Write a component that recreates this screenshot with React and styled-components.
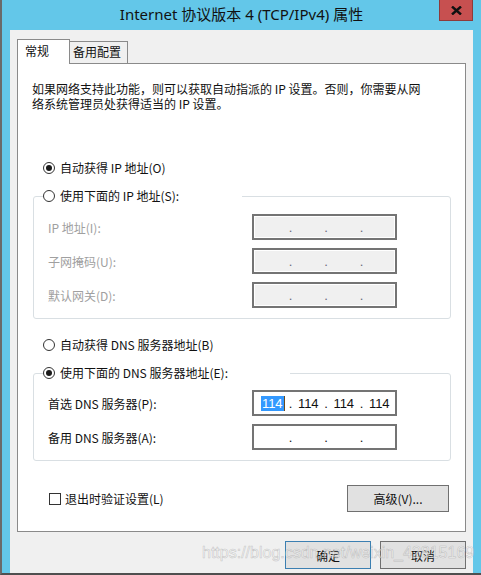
import React from 'react';
import styled, { createGlobalStyle } from 'styled-components';

const UI_FONT = `"Noto Sans CJK SC", "Noto Sans", sans-serif`;

const GlobalStyle = createGlobalStyle`
    html, body {
        margin: 0;
        padding: 0;
        background: #ffffff;
    }

    * {
        box-sizing: border-box;
    }
`;

const Window = styled.div`
    position: relative;
    width: 481px;
    height: 575px;
    display: flex;
    flex-direction: column;
    background: #63c7e9;
    border-left: 2px solid #6a6a6a;
    border-bottom: 2px solid #4f4f4f;
    padding: 0 8px;
    overflow: hidden;
`;

const TitleBar = styled.div`
    height: 30px;
    flex: none;
    display: grid;
    grid-template-columns: 1fr auto 1fr;
`;

const Title = styled.div`
    grid-column: 2;
    align-self: center;
    font-family: "Noto Sans", "Noto Sans CJK SC", sans-serif;
    font-size: 15px;
    line-height: 20px;
    color: #111;
    white-space: nowrap;
    margin-top: -2px;
`;

const CloseButton = styled.div`
    grid-column: 3;
    justify-self: end;
    align-self: start;
    width: 34px;
    height: 21px;
    background: #c75050;
    border: 1px solid #8e3b3b;
    border-top: none;
    display: flex;
    align-items: center;
    justify-content: center;
`;

const Client = styled.div`
    flex: 1;
    background: #f0f0f0;
    padding: 9px 7px 0 7px;
    display: flex;
    flex-direction: column;
    font-family: ${UI_FONT};
    font-size: 12px;
    color: #111;
`;

const TabRow = styled.div`
    display: flex;
    align-items: flex-end;
    margin-bottom: -1px;
    position: relative;
    z-index: 1;
`;

const Tab = styled.div`
    height: ${p => (p.$active ? '25px' : '23px')};
    width: ${p => (p.$active ? '53px' : '58px')};
    padding-left: ${p => (p.$active ? '7px' : '3px')};
    padding-top: ${p => (p.$active ? '3px' : '2px')};
    line-height: 16px;
    background: ${p => (p.$active ? '#ffffff' : '#f0f0f0')};
    border: 1px solid #8a8a8a;
    border-left: ${p => (p.$active ? '1px solid #8a8a8a' : 'none')};
    border-bottom: ${p => (p.$active ? 'none' : '1px solid #8a8a8a')};
`;

const Panel = styled.div`
    height: 469px;
    flex: none;
    background: #ffffff;
    border: 1px solid #8a8a8a;
    padding: 17px 14px 0 15px;
    display: flex;
    flex-direction: column;
`;

const Description = styled.p`
    margin: 0 0 0 -1px;
    line-height: 15px;
    white-space: nowrap;
`;

const OptionRow = styled.label`
    display: flex;
    align-items: center;
    height: 16px;
    line-height: 16px;
    margin: ${p => p.$top || 0}px 0 0 10px;
    white-space: nowrap;
`;

const Radio = styled.span`
    width: 12px;
    height: 12px;
    flex: none;
    border-radius: 50%;
    border: 1px solid #333;
    background: #fff;
    margin-right: 5px;
    display: flex;
    align-items: center;
    justify-content: center;

    &::after {
        content: '';
        width: 6px;
        height: 6px;
        border-radius: 50%;
        background: ${p => (p.$checked ? '#1a1a1a' : 'transparent')};
    }
`;

const Group = styled.fieldset`
    margin: 12px 0 0 0;
    padding: 0 0 10px 0;
    border: 1px solid #d9dfe3;
    border-radius: 3px;
    min-width: 0;
`;

const Legend = styled.legend`
    width: ${p => p.$width}px;
    margin-left: 9px;
    padding: 0;
    height: 16px;
    line-height: 16px;
    display: flex;
    align-items: center;
    white-space: nowrap;
`;

const FieldList = styled.div`
    display: flex;
    flex-direction: column;
    gap: 8px;
    padding: ${p => p.$top}px 0 0 14px;
`;

const FieldRow = styled.div`
    display: flex;
    align-items: center;
    height: 26px;
`;

const FieldLabel = styled.span`
    width: 204px;
    flex: none;
    color: ${p => (p.$disabled ? '#a0a0a0' : '#111')};
`;

const IpBox = styled.div`
    width: 145px;
    height: 26px;
    border: 2px solid #747474;
    background: ${p => (p.$disabled ? '#f0f0f0' : '#ffffff')};
    box-shadow: ${p => (p.$disabled ? 'inset 0 0 0 1px #ffffff' : 'none')};
    padding-left: 3px;
    display: grid;
    grid-template-columns: 1fr 4px 1fr 4px 1fr 4px 1fr;
    align-items: center;
    font-family: "Liberation Sans", Arial, sans-serif;
    font-size: 13px;
    line-height: 15px;
    color: #111;
`;

const Octet = styled.span`
    text-align: center;
`;

const Selected = styled.span`
    background: #3399ff;
    color: #ffffff;
    padding: 0 1px;
    border-right: 1px solid #6b4a1e;
`;

const Dot = styled.span`
    text-align: center;
    color: ${p => (p.$disabled ? '#6a6a7a' : '#111')};
`;

const BottomRow = styled.div`
    margin: 24px 2px 0 16px;
    display: flex;
    align-items: center;
    justify-content: space-between;
`;

const CheckLabel = styled.label`
    display: flex;
    align-items: center;
    line-height: 16px;
`;

const CheckBox = styled.span`
    width: 12px;
    height: 12px;
    border: 1px solid #333;
    background: #fff;
    margin-right: 4px;
`;

const Button = styled.button`
    width: ${p => p.$width || 86}px;
    height: ${p => p.$height || 28}px;
    background: #e1e1e1;
    border: 1px solid ${p => (p.$default ? '#3c7fb1' : '#707070')};
    font-family: ${UI_FONT};
    font-size: 12px;
    color: #111;
    padding: 0;
`;

const Footer = styled.div`
    margin-top: 9px;
    display: flex;
    justify-content: flex-end;
    gap: 9px;
`;

const Watermark = styled.div`
    position: absolute;
    left: 200px;
    top: 544px;
    font-family: "Liberation Sans", Arial, sans-serif;
    font-size: 16px;
    color: rgba(255, 255, 255, 0.55);
    -webkit-text-stroke: 0.6px rgba(140, 140, 140, 0.45);
    white-space: nowrap;
    pointer-events: none;
`;

const CloseIcon = () => (
    <svg width="11" height="9" viewBox="0 0 11 9">
        <path d="M1 0.5 L10 8.5 M10 0.5 L1 8.5" stroke="#111" strokeWidth="2.4" />
    </svg>
);

const AddressBox = ({ disabled, values, selectFirst }) => {
    const parts = values || ['', '', '', ''];
    return (
        <IpBox $disabled={disabled}>
            {parts.map((v, i) => (
                <React.Fragment key={i}>
                    {i > 0 && <Dot $disabled={disabled}>.</Dot>}
                    <Octet>
                        {i === 0 && selectFirst ? <Selected>{v}</Selected> : v}
                    </Octet>
                </React.Fragment>
            ))}
        </IpBox>
    );
};

const App = () => {
    return (
        <Window>
            <GlobalStyle />

            <TitleBar>
                <Title>Internet 协议版本 4 (TCP/IPv4) 属性</Title>
                <CloseButton>
                    <CloseIcon />
                </CloseButton>
            </TitleBar>

            <Client>
                <TabRow>
                    <Tab $active>常规</Tab>
                    <Tab>备用配置</Tab>
                </TabRow>

                <Panel>
                    <Description>
                        如果网络支持此功能，则可以获取自动指派的 IP 设置。否则，你需要从网
                        <br />
                        络系统管理员处获得适当的 IP 设置。
                    </Description>

                    {/* ip address */}
                    <OptionRow $top={49}>
                        <Radio $checked />
                        自动获得 IP 地址(O)
                    </OptionRow>

                    <Group>
                        <Legend $width={199}>
                            <Radio />
                            使用下面的 IP 地址(S):
                        </Legend>
                        <FieldList $top={10}>
                            <FieldRow>
                                <FieldLabel $disabled>IP 地址(I):</FieldLabel>
                                <AddressBox disabled />
                            </FieldRow>
                            <FieldRow>
                                <FieldLabel $disabled>子网掩码(U):</FieldLabel>
                                <AddressBox disabled />
                            </FieldRow>
                            <FieldRow>
                                <FieldLabel $disabled>默认网关(D):</FieldLabel>
                                <AddressBox disabled />
                            </FieldRow>
                        </FieldList>
                    </Group>

                    {/* dns */}
                    <OptionRow $top={18}>
                        <Radio />
                        自动获得 DNS 服务器地址(B)
                    </OptionRow>

                    <Group>
                        <Legend $width={247}>
                            <Radio $checked />
                            使用下面的 DNS 服务器地址(E):
                        </Legend>
                        <FieldList $top={9}>
                            <FieldRow>
                                <FieldLabel>首选 DNS 服务器(P):</FieldLabel>
                                <AddressBox values={['114', '114', '114', '114']} selectFirst />
                            </FieldRow>
                            <FieldRow>
                                <FieldLabel>备用 DNS 服务器(A):</FieldLabel>
                                <AddressBox />
                            </FieldRow>
                        </FieldList>
                    </Group>

                    <BottomRow>
                        <CheckLabel>
                            <CheckBox />
                            退出时验证设置(L)
                        </CheckLabel>
                        <Button $width={102} $height={27}>高级(V)...</Button>
                    </BottomRow>
                </Panel>

                <Footer>
                    <Button $default>确定</Button>
                    <Button>取消</Button>
                </Footer>
            </Client>

            <Watermark>https://blog.csdn.net/weixin_42815169</Watermark>
        </Window>
    );
};

export default App;
